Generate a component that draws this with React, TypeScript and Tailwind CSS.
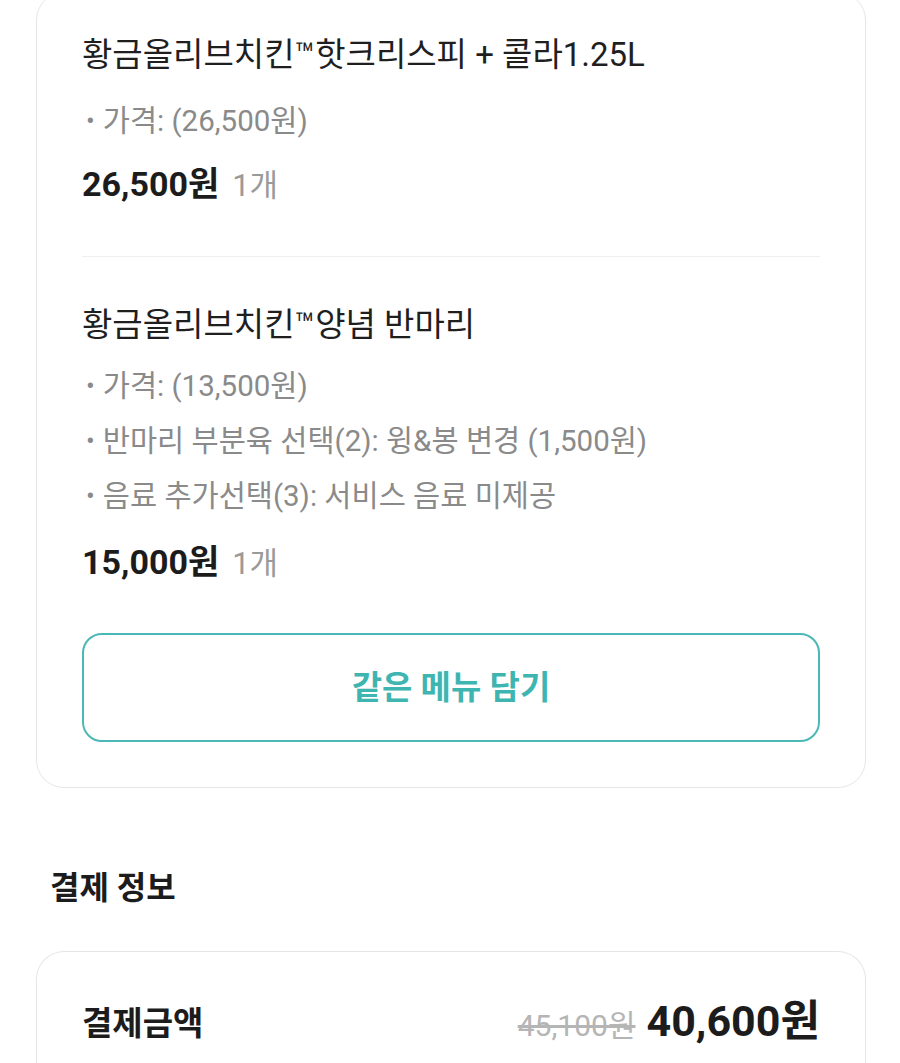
import React from "react";

const font = { fontFamily: 'Roboto, "Noto Sans CJK KR", sans-serif' };

function Option({ children }: { children: React.ReactNode }) {
  return (
    <div className="flex items-center text-[29.5px] leading-[36px] text-[#8a8a8a]">
      <span className="mr-[8px] ml-[4px] text-[26px]">•</span>
      <span>{children}</span>
    </div>
  );
}

function Price({ price }: { price: string }) {
  return (
    <div className="flex items-baseline gap-[13px] leading-[40px]">
      <span className="text-[34px] font-bold text-[#1c1c1c]">{price}</span>
      <span className="text-[31px] text-[#9a9a9a]">1개</span>
    </div>
  );
}

export default function App() {
  return (
    <div className="min-h-[1063px] overflow-hidden bg-white" style={font}>
      <div className="-mt-[8px] ml-[36px] w-[830px] rounded-[28px] border border-[#e6e6e6] bg-white px-[45px] pt-[41px] pb-[45px]">
        <div className="text-[33px] leading-[42px] text-[#1f1f1f]">
          황금올리브치킨™핫크리스피 + 콜라1.25L
        </div>
        <div className="mt-[27px]">
          <Option>가격: (26,500원)</Option>
        </div>
        <div className="mt-[25px]">
          <Price price="26,500원" />
        </div>
        <div className="mt-[50px] h-px bg-[#efefef]" />
        <div className="mt-[47px] text-[33px] leading-[42px] text-[#1f1f1f]">
          황금올리브치킨™양념 반마리
        </div>
        <div className="mt-[22px] flex flex-col gap-[19px]">
          <Option>가격: (13,500원)</Option>
          <Option>반마리 부분육 선택(2): 윙&amp;봉 변경 (1,500원)</Option>
          <Option>음료 추가선택(3): 서비스 음료 미제공</Option>
        </div>
        <div className="mt-[28px]">
          <Price price="15,000원" />
        </div>
        <button className="mt-[49px] flex h-[109px] w-full items-center justify-center rounded-[20px] border-2 border-[#4cb8b6] bg-white text-[33px] font-bold text-[#3fb5b1]">
          같은 메뉴 담기
        </button>
      </div>

      <div className="mt-[80px] ml-[50px] text-[32px] font-bold leading-[40px] text-[#1c1c1c]">
        결제 정보
      </div>

      <div className="mt-[43px] ml-[36px] w-[830px] rounded-t-[28px] border border-b-0 border-[#e6e6e6] bg-white px-[45px] pt-[45px] pb-[20px]">
        <div className="flex items-center justify-between">
          <span className="text-[33px] font-bold leading-[48px] text-[#1c1c1c]">결제금액</span>
          <div className="flex items-baseline gap-[11px] leading-[48px]">
            <span className="text-[30px] text-[#b5b5b5] line-through">45,100원</span>
            <span className="text-[43px] font-bold text-[#1c1c1c]">40,600원</span>
          </div>
        </div>
        <div className="mt-[14px] flex justify-end">
          <div className="mr-[14px] h-[10px] w-[170px] rounded-t-[8px] bg-[#eef0f7]" />
        </div>
      </div>
    </div>
  );
}
